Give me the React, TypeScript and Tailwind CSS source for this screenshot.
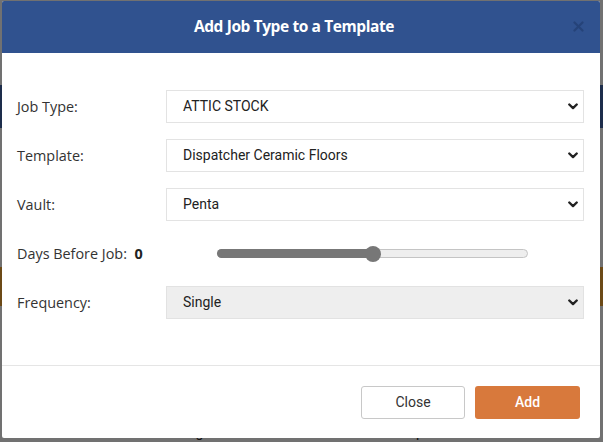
import React, { useState } from 'react';

const labelFont = { fontFamily: '"Open Sans", "Noto Sans", sans-serif' };

const Chevron = () => (
  <svg width="10" height="7" viewBox="0 0 10 7" className="shrink-0">
    <path d="M1.3 1.5 L5 5.1 L8.7 1.5" fill="none" stroke="#222" strokeWidth="2.4" strokeLinecap="round" strokeLinejoin="round" />
  </svg>
);

function FakeSelect({ value, disabled }: { value: string; disabled?: boolean }) {
  return (
    <div
      className={`flex h-[33px] flex-1 items-center justify-between border pl-[16px] pr-[5px] text-[14px] text-[#222] ${
        disabled ? 'border-[#e2e2e2] bg-[#eeeeee]' : 'border-[#e3e3e3] bg-white'
      }`}
      style={{ fontFamily: 'Roboto, "Liberation Sans", sans-serif' }}
    >
      <span>{value}</span>
      <Chevron />
    </div>
  );
}

function Row({ label, children }: { label: React.ReactNode; children: React.ReactNode }) {
  return (
    <div className="flex h-[33px] items-center">
      <div className="w-[150px] shrink-0 pl-[1px] text-[14.4px] text-[#333]" style={labelFont}>
        {label}
      </div>
      {children}
    </div>
  );
}

export default function App() {
  const [days] = useState(50);

  return (
    <div className="relative h-[442px] w-[603px] overflow-hidden bg-[#e2e2e2]" style={labelFont}>
      {/* page behind the dialog */}
      <div className="flex h-full flex-col">
        <div className="h-[88px]" />
        <div className="h-[45px] bg-[#3a5a96]" />
        <div className="h-[145px]" />
        <div className="h-[40px] bg-[#d8952f]" />
        <div className="h-[121px]" />
        <div className="flex h-[20px] items-start text-[14px] text-[#222]" style={{ fontFamily: 'Roboto, sans-serif' }}>
          <span className="ml-[176px]">Single</span>
          <span className="ml-[182px]">Dispatch Tester</span>
        </div>
      </div>
      <div className="absolute inset-0 bg-black/50" />

      {/* dialog */}
      <div className="absolute left-[2px] top-[1px] flex h-[437px] w-[598px] flex-col rounded-[2px] bg-white">
        <div className="relative flex h-[52px] shrink-0 items-center justify-center rounded-t-[2px] bg-[#30528f]">
          <h3 className="mr-[14px] text-[15.5px] font-bold tracking-[-0.4px] text-white">Add Job Type to a Template</h3>
          <button className="absolute right-[16px] top-[20px] opacity-60">
            <svg width="11" height="11" viewBox="0 0 11 11">
              <path d="M1.5 1.5 L9.5 9.5 M9.5 1.5 L1.5 9.5" stroke="#1f3a6b" strokeWidth="2.2" strokeLinecap="round" />
            </svg>
          </button>
        </div>

        <div className="flex flex-1 flex-col gap-[16px] pl-[14px] pr-[16px] pt-[37px]">
          <Row label="Job Type:">
            <FakeSelect value="ATTIC STOCK" />
          </Row>
          <Row label="Template:">
            <FakeSelect value="Dispatcher Ceramic Floors" />
          </Row>
          <Row label="Vault:">
            <FakeSelect value="Penta" />
          </Row>
          <Row
            label={
              <span>
                Days Before Job:&nbsp; <b className="font-bold text-[#222]">0</b>
              </span>
            }
          >
            <div className="relative ml-[51px] h-[9px] w-[311px] rounded-full border border-[#c4c4c4] bg-[#eeeeee]">
              <div className="absolute -left-px -top-px h-[9px] rounded-full bg-[#777777]" style={{ width: `${days}%` }} />
              <div
                className="absolute top-1/2 h-[16px] w-[16px] -translate-x-1/2 -translate-y-1/2 rounded-full bg-[#777777]"
                style={{ left: `${days}%` }}
              />
            </div>
          </Row>
          <Row label="Frequency:">
            <FakeSelect value="Single" disabled />
          </Row>
        </div>

        <div className="flex h-[73px] shrink-0 items-center justify-end gap-[10px] border-t border-[#e5e5e5] pr-[20px]">
          <button
            className="h-[33px] w-[104px] rounded-[3px] border border-[#c8c8c8] bg-white text-[14px] text-[#333]"
            style={{ fontFamily: 'Roboto, sans-serif' }}
          >
            Close
          </button>
          <button
            className="h-[33px] w-[105px] rounded-[3px] bg-[#d8793c] text-[14px] font-medium text-white"
            style={{ fontFamily: 'Roboto, sans-serif' }}
          >
            Add
          </button>
        </div>
      </div>
    </div>
  );
}
